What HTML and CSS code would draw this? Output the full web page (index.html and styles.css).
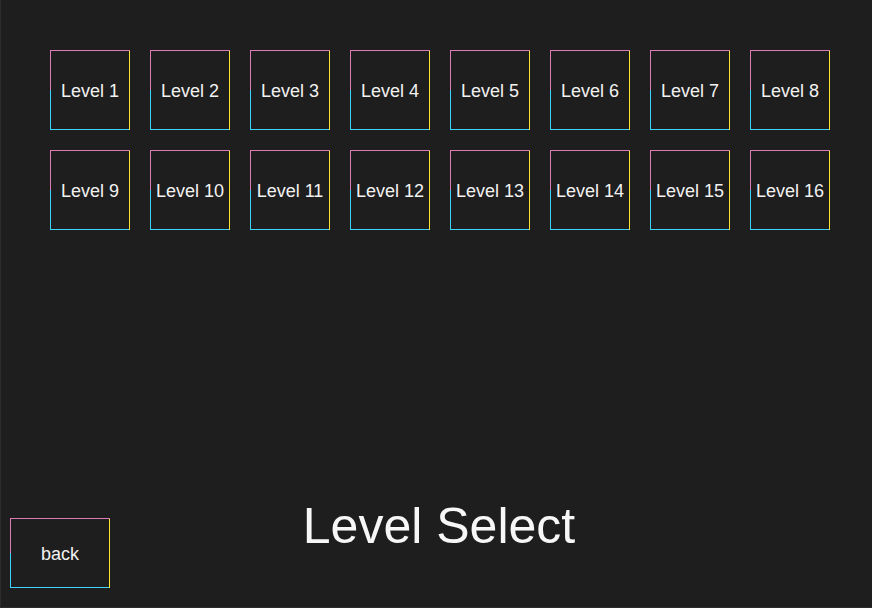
FILE: index.html
```html
<!DOCTYPE html>
<html lang="en">
<head>
<meta charset="utf-8">
<title>Level Select</title>
<link rel="stylesheet" href="styles.css">
</head>
<body>
<div class="screen">
  <div class="levels">
    <div class="tile">Level 1</div>
    <div class="tile">Level 2</div>
    <div class="tile">Level 3</div>
    <div class="tile">Level 4</div>
    <div class="tile">Level 5</div>
    <div class="tile">Level 6</div>
    <div class="tile">Level 7</div>
    <div class="tile">Level 8</div>
    <div class="tile">Level 9</div>
    <div class="tile">Level 10</div>
    <div class="tile">Level 11</div>
    <div class="tile">Level 12</div>
    <div class="tile">Level 13</div>
    <div class="tile">Level 14</div>
    <div class="tile">Level 15</div>
    <div class="tile">Level 16</div>
  </div>
  <div class="footer">
    <div class="tile back">back</div>
    <h1 class="title">Level Select</h1>
    <div class="footer-fill"></div>
  </div>
</div>
</body>
</html>
```
FILE: styles.css
```css
html, body {
  margin: 0;
  padding: 0;
  background: #1e1e1e;
}

.screen {
  box-sizing: border-box;
  height: 608px;
  border-left: 1px solid #2c2c2c;
  border-bottom: 1px solid #2c2c2c;
  display: flex;
  flex-direction: column;
  justify-content: space-between;
  font-family: "Liberation Sans", Arial, sans-serif;
  color: #f2f2f2;
}

.levels {
  display: grid;
  grid-template-columns: repeat(8, 80px);
  grid-auto-rows: 80px;
  gap: 20px;
  padding: 50px 0 0 49px;
}

/* neon outline drawn as 1px edge strips:
   pink top, yellow right, cyan bottom, pink/cyan split left */
.tile {
  box-sizing: border-box;
  width: 80px;
  height: 80px;
  padding: 2px 0 0 0;
  background:
    linear-gradient(#dc7ab6, #dc7ab6) left top / 100% 1px no-repeat,
    linear-gradient(#ffe52e, #ffe52e) right top / 1px 100% no-repeat,
    linear-gradient(#3fd4ff, #3fd4ff) left bottom / 100% 1px no-repeat,
    linear-gradient(to bottom, #dc7ab6 50%, #3fd4ff 50%) left top / 1px 100% no-repeat;
  font-size: 18px;
  color: #f2f2f2;
  display: flex;
  align-items: center;
  justify-content: center;
  white-space: nowrap;
  cursor: pointer;
}

.footer {
  display: grid;
  grid-template-columns: 1fr auto 1fr;
  align-items: end;
  padding: 0 4px 19px 9px;
}

.back {
  width: 100px;
  height: 70px;
}

.title {
  margin: 0 0 34px 0;
  font-size: 50px;
  font-weight: normal;
  line-height: 56px;
  color: #f7f7f7;
}
```
